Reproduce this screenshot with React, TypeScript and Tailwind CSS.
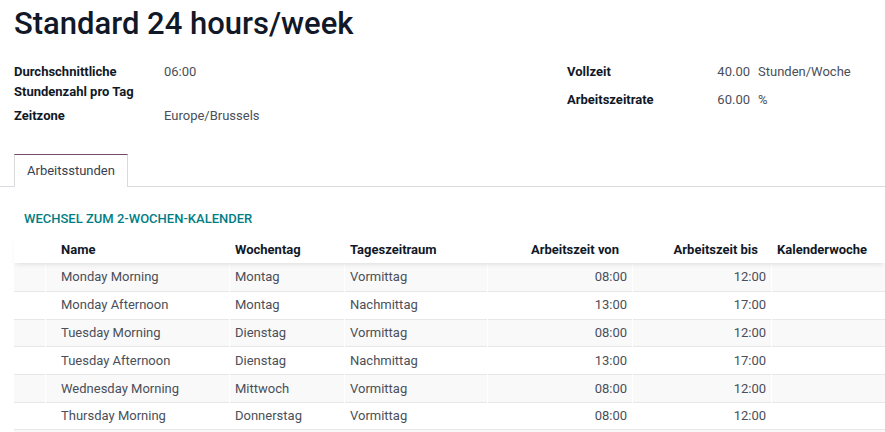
import React from "react";

type Slot = { name: string; day: string; period: string; from: string; to: string };

const slots: Slot[] = [
  { name: "Monday Morning", day: "Montag", period: "Vormittag", from: "08:00", to: "12:00" },
  { name: "Monday Afternoon", day: "Montag", period: "Nachmittag", from: "13:00", to: "17:00" },
  { name: "Tuesday Morning", day: "Dienstag", period: "Vormittag", from: "08:00", to: "12:00" },
  { name: "Tuesday Afternoon", day: "Dienstag", period: "Nachmittag", from: "13:00", to: "17:00" },
  { name: "Wednesday Morning", day: "Mittwoch", period: "Vormittag", from: "08:00", to: "12:00" },
  { name: "Thursday Morning", day: "Donnerstag", period: "Vormittag", from: "08:00", to: "12:00" },
];

const cols = "grid grid-cols-[31px_183px_114px_142px_144px_138px_1fr] gap-x-px";

export default function App() {
  return (
    <div className="min-h-screen bg-white font-['Roboto',sans-serif] text-[13px] text-[#4a4f59] overflow-hidden">
      {/* Title */}
      <h1 className="pt-[5px] pl-[14px] text-[31px] leading-[1.2] font-medium text-[#111827]">
        Standard 24 hours/week
      </h1>

      {/* Fields */}
      <div className="mt-5 flex leading-5">
        <div className="w-[567px] pl-[14px] flex flex-col gap-1">
          <div className="flex">
            <div className="w-[150px] font-bold text-[#111827] pr-2">Durchschnittliche Stundenzahl pro Tag</div>
            <div>06:00</div>
          </div>
          <div className="flex">
            <div className="w-[150px] font-bold text-[#111827]">Zeitzone</div>
            <div>Europe/Brussels</div>
          </div>
        </div>
        <div className="flex flex-col gap-2">
          <div className="flex">
            <div className="w-[150px] font-bold text-[#111827]">Vollzeit</div>
            <div className="w-[33px] text-right">40.00</div>
            <div className="ml-2">Stunden/Woche</div>
          </div>
          <div className="flex">
            <div className="w-[150px] font-bold text-[#111827]">Arbeitszeitrate</div>
            <div className="w-[33px] text-right">60.00</div>
            <div className="ml-2">%</div>
          </div>
        </div>
      </div>

      {/* Tabs */}
      <div className="mt-[28px] flex border-b border-[#d8dadd] pl-[14px]">
        <div className="-mb-px h-[33px] flex items-center px-3 border-t border-x border-t-[#714b67] border-x-[#d8dadd] bg-white text-[#374151]">
          Arbeitsstunden
        </div>
      </div>

      {/* Link */}
      <div className="mt-[22px] pl-[24px] leading-5 font-medium text-[#017e84] uppercase">
        Wechsel zum 2-Wochen-Kalender
      </div>

      {/* Table */}
      <div className="mt-[7px] pl-[14px]">
        <div className={`${cols} h-[27px] items-center font-bold text-[#111827] bg-white relative z-10 shadow-[0_3px_5px_-2px_rgba(0,0,0,0.12)]`}>
          <div />
          <div className="pl-[15px]">Name</div>
          <div className="pl-[5px]">Wochentag</div>
          <div className="pl-[5px]">Tageszeitraum</div>
          <div className="pr-[13px] text-right">Arbeitszeit von</div>
          <div className="pr-[13px] text-right">Arbeitszeit bis</div>
          <div className="pl-[5px] whitespace-nowrap">Kalenderwoche</div>
        </div>
        {slots.map((s, i) => {
          const bg = i % 2 === 0 ? "bg-[#f9f9f9]" : "bg-white";
          const cell = `${bg} h-[27.7px] flex items-center ${i === 0 ? "" : "border-t border-[#e6e7ea]"}`;
          return (
            <div key={s.name} className={cols}>
              <div className={cell} />
              <div className={`${cell} pl-[15px]`}>{s.name}</div>
              <div className={`${cell} pl-[5px]`}>{s.day}</div>
              <div className={`${cell} pl-[5px]`}>{s.period}</div>
              <div className={`${cell} justify-end pr-[5px]`}>{s.from}</div>
              <div className={`${cell} justify-end pr-[5px]`}>{s.to}</div>
              <div className={cell} />
            </div>
          );
        })}
        <div className="h-[6px] bg-[#f9f9f9] border-t border-[#e6e7ea]" />
      </div>
    </div>
  );
}
